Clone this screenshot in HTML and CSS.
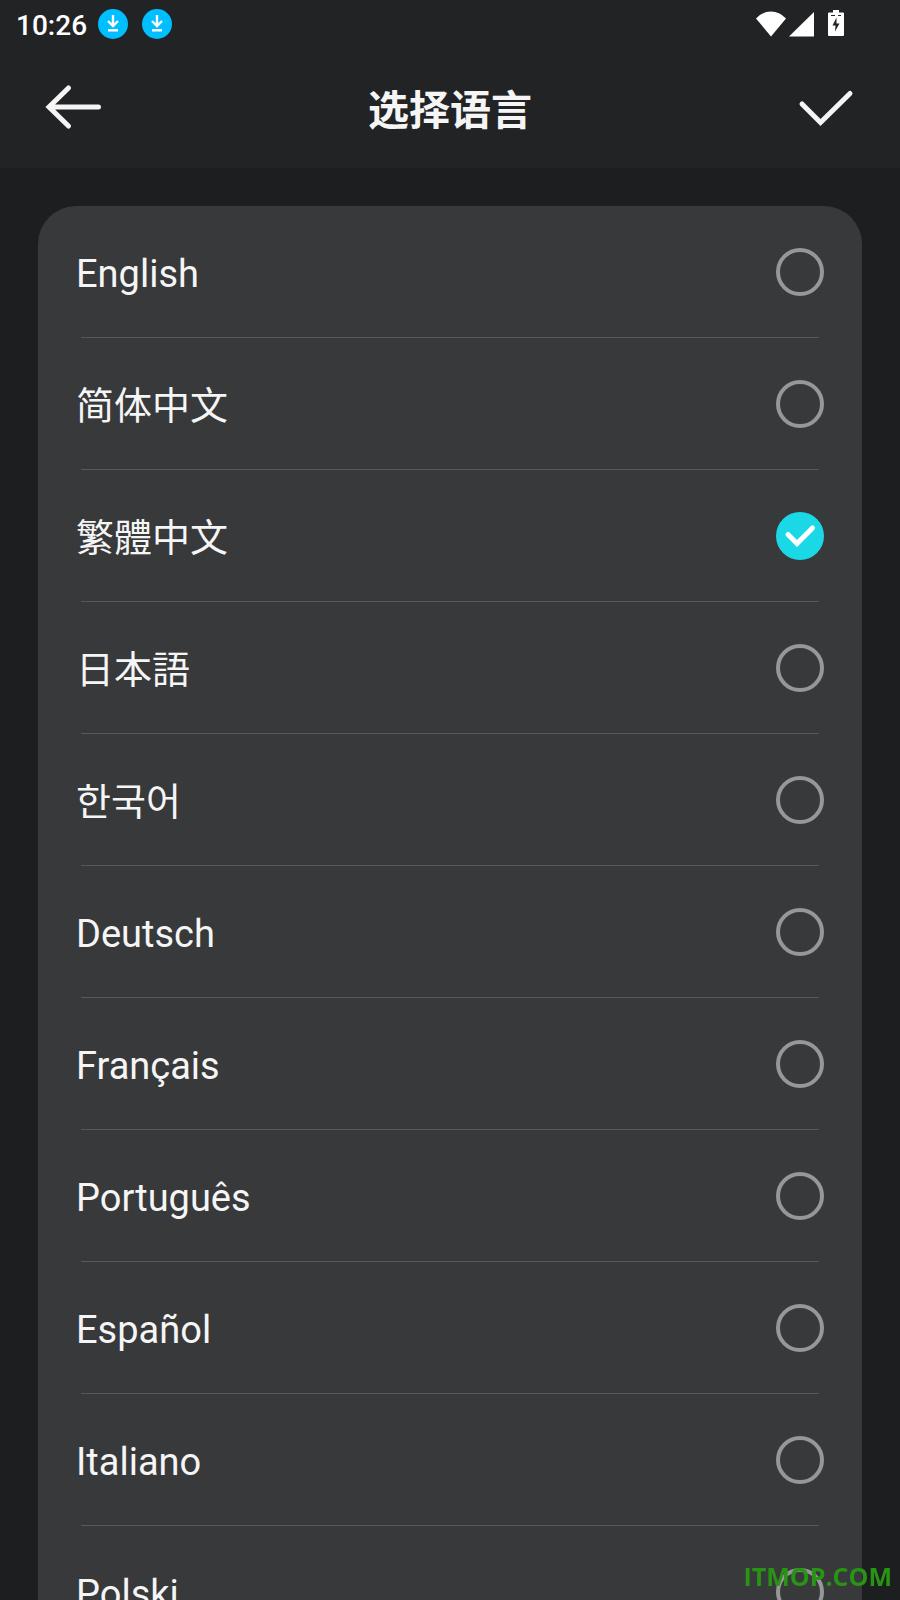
FILE: index.html
```html
<!DOCTYPE html>
<html lang="zh-CN">
<head>
  <meta charset="UTF-8" />
  <meta name="viewport" content="width=device-width, initial-scale=1.0"/>
  <title>选择语言</title>
  <link rel="stylesheet" href="styles.css">
</head>
<body>
  <!-- shared icons -->
  <svg class="sprite" aria-hidden="true">
    <symbol id="download" viewBox="0 0 30 30">
      <circle cx="15" cy="15" r="15" fill="#00bfff"/>
      <path d="M15 6v11M10 12l5 5 5-5M10 21.200h10" fill="none" stroke="#fff" stroke-width="2.400"/>
    </symbol>
    <symbol id="tick" viewBox="0 0 48 48">
      <path d="M12 22.500l9 9L36.500 16" fill="none" stroke="#fff" stroke-width="5" stroke-linecap="round"/>
    </symbol>
  </svg>

  <header>
    <div class="status">
      <span class="time">10:26</span>
      <svg class="notice" aria-hidden="true"><use href="#download"/></svg>
      <svg class="notice" aria-hidden="true"><use href="#download"/></svg>
      <svg class="signals" viewBox="0 0 88 28" aria-hidden="true">
        <path d="M0 8.500Q6.500 1.500 15 1.500t15 7L15 26.500z" fill="#fff"/>
        <path d="M33 26.500L58 2v24.500z" fill="#fff"/>
        <path d="M77 0h6v2.500h4q1 0 1 1V25q0 1-1 1H73q-1 0-1-1V3.500q0-1 1-1h4z" fill="#fff"/>
        <path d="M75 5.500h4M82 5.500h3" stroke="#222325" stroke-width="1.200"/>
        <path d="M80.500 7.500l-4 8h3l-.5 6 4.500-8h-3z" fill="#222325"/>
      </svg>
    </div>
    <div class="bar">
      <button type="button" aria-label="返回">
        <svg viewBox="0 0 60 48" aria-hidden="true"><path d="M26.500 4L7 23l19.500 19M8 23h48.500"/></svg>
      </button>
      <h1>选择语言</h1>
      <button type="submit" form="languages" aria-label="确定">
        <svg viewBox="0 0 60 48" aria-hidden="true"><path d="M4 20l18.500 18.500L52 9.500"/></svg>
      </button>
    </div>
  </header>

  <main>
    <form id="languages" class="card">
      <label class="row"><span class="name">English</span><span class="choice"><input type="radio" name="lang" value="en"><svg aria-hidden="true"><use href="#tick"/></svg></span></label>
      <label class="row" lang="zh-CN"><span class="name">简体中文</span><span class="choice"><input type="radio" name="lang" value="zh-CN"><svg aria-hidden="true"><use href="#tick"/></svg></span></label>
      <label class="row" lang="zh-TW"><span class="name">繁體中文</span><span class="choice"><input type="radio" name="lang" value="zh-TW" checked><svg aria-hidden="true"><use href="#tick"/></svg></span></label>
      <label class="row" lang="ja"><span class="name">日本語</span><span class="choice"><input type="radio" name="lang" value="ja"><svg aria-hidden="true"><use href="#tick"/></svg></span></label>
      <label class="row" lang="ko"><span class="name">한국어</span><span class="choice"><input type="radio" name="lang" value="ko"><svg aria-hidden="true"><use href="#tick"/></svg></span></label>
      <label class="row"><span class="name">Deutsch</span><span class="choice"><input type="radio" name="lang" value="de"><svg aria-hidden="true"><use href="#tick"/></svg></span></label>
      <label class="row"><span class="name">Français</span><span class="choice"><input type="radio" name="lang" value="fr"><svg aria-hidden="true"><use href="#tick"/></svg></span></label>
      <label class="row"><span class="name">Português</span><span class="choice"><input type="radio" name="lang" value="pt"><svg aria-hidden="true"><use href="#tick"/></svg></span></label>
      <label class="row"><span class="name">Español</span><span class="choice"><input type="radio" name="lang" value="es"><svg aria-hidden="true"><use href="#tick"/></svg></span></label>
      <label class="row"><span class="name">Italiano</span><span class="choice"><input type="radio" name="lang" value="it"><svg aria-hidden="true"><use href="#tick"/></svg></span></label>
      <label class="row"><span class="name">Polski</span><span class="choice"><input type="radio" name="lang" value="pl"><svg aria-hidden="true"><use href="#tick"/></svg></span></label>
    </form>
  </main>

  <div class="watermark">ITMOP.COM</div>
</body>
</html>
```

FILE: styles.css
```css
* {
  margin: 0;
  padding: 0;
  box-sizing: border-box;
}

body {
  height: 100vh;
  display: flex;
  flex-direction: column;
  background: #1d1e20;
  color: #f5f5f5;
  font-family: Roboto, "Noto Sans CJK SC", sans-serif;
}

.sprite {
  display: none;
}

header {
  background: #222325;
}

.status {
  height: 48px;
  padding: 0 56px 0 16px;
  display: flex;
  align-items: center;
  gap: 14px;
}

.time {
  color: #fff;
  font-size: 28px;
  font-weight: 500;
  line-height: 48px;
  padding-top: 3px;
  margin-right: -3px;
}

.notice {
  width: 30px;
  height: 30px;
}

.signals {
  width: 88px;
  height: 28px;
  margin-left: auto;
}

.bar {
  height: 120px;
  padding: 0 42px;
  display: flex;
  align-items: center;
  justify-content: space-between;
}

.bar h1 {
  padding-top: 5px;
  font-size: 41px;
  font-weight: 700;
  line-height: 60px;
}

.bar button {
  width: 60px;
  height: 48px;
  background: none;
  border: none;
  cursor: pointer;
}

.bar svg {
  display: block;
  width: 60px;
  height: 48px;
  fill: none;
  stroke: #f5f5f5;
  stroke-width: 5px;
  stroke-linecap: round;
}

main {
  flex: 1;
  min-height: 0;
  padding: 38px 38px 0;
  overflow-y: auto;
  scrollbar-width: none;
}

.card {
  background: #38393b;
  border-radius: 38px 38px 0 0;
}

.row {
  height: 132px;
  padding: 0 38px;
  display: flex;
  align-items: center;
  justify-content: space-between;
  background: linear-gradient(#59595b, #59595b) center bottom / calc(100% - 86px) 1px no-repeat;
  cursor: pointer;
}

.row:last-child {
  background: none;
}

.name {
  padding-top: 4px;
  font-size: 38px;
  line-height: 48px;
}

.row:lang(zh-TW) .name {
  font-family: Roboto, "Noto Sans CJK TC", sans-serif;
}

.row:lang(ja) .name {
  font-family: Roboto, "Noto Sans CJK JP", sans-serif;
}

.row:lang(ko) .name {
  font-family: Roboto, "Noto Sans CJK KR", sans-serif;
}

/* the tick is stacked over the radio and only shown when it is checked */
.choice {
  display: grid;
}

.choice input,
.choice svg {
  grid-area: 1 / 1;
  width: 48px;
  height: 48px;
}

.choice input {
  appearance: none;
  border: 4px solid #979797;
  border-radius: 50%;
  cursor: pointer;
}

.choice svg {
  visibility: hidden;
  pointer-events: none;
}

.choice input:checked {
  border: none;
  background: #1bd8e6;
}

.choice input:checked + svg {
  visibility: visible;
}

.watermark {
  position: fixed;
  right: 8px;
  bottom: 6px;
  color: #279414;
  font-family: "Open Sans", sans-serif;
  font-size: 25px;
  font-weight: 700;
  line-height: 36px;
  pointer-events: none;
}
```
